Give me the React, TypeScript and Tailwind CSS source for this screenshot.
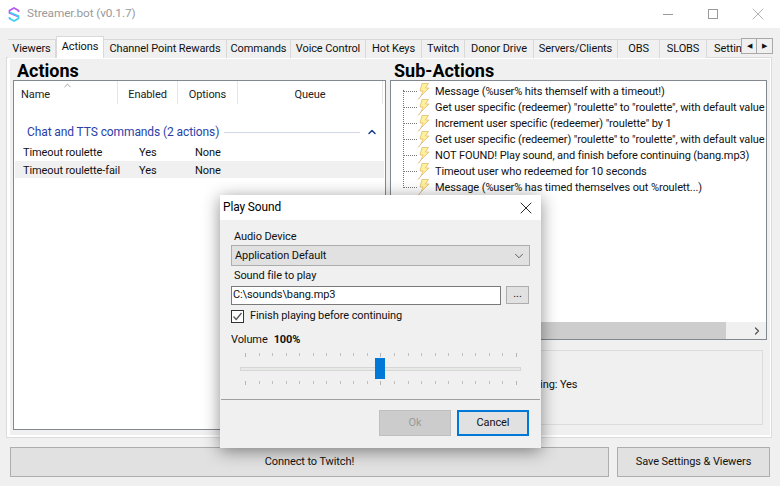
import { X, ChevronDown, ChevronUp, ChevronRight } from "lucide-react"

const tabs = [
  { label: "Viewers", width: "w-[48px]" },
  { label: "Actions", width: "w-[48px]", active: true },
  { label: "Channel Point Rewards", width: "w-[123px]" },
  { label: "Commands", width: "w-[64px]" },
  { label: "Voice Control", width: "w-[75px]" },
  { label: "Hot Keys", width: "w-[56px]" },
  { label: "Twitch", width: "w-[43px]" },
  { label: "Donor Drive", width: "w-[69px]" },
  { label: "Servers/Clients", width: "w-[84px]" },
  { label: "OBS", width: "w-[42px]" },
  { label: "SLOBS", width: "w-[47px]" },
]

const subActions = [
  'Message (%user% hits themself with a timeout!)',
  'Get user specific (redeemer) "roulette" to "roulette", with default value',
  'Increment user specific (redeemer) "roulette" by 1',
  'Get user specific (redeemer) "roulette" to "roulette", with default value',
  'NOT FOUND! Play sound, and finish before continuing (bang.mp3)',
  'Timeout user who redeemed for 10 seconds',
  'Message (%user% has timed themselves out %roulett...)',
]

const ticks = Array.from({ length: 21 }, (_, i) => i)

function Bolt() {
  return (
    <svg width="13" height="17" viewBox="0 0 13 17" className="shrink-0">
      <path d="M5 .5 L11.5 .5 L8.5 5 L12 5 L4 13 L6 8 L3 8 Z" fill="#fff09a" stroke="#e0bd70" strokeWidth="0.8" />
      <path d="M4 13 L1 16.5" stroke="#dcbc88" strokeWidth="1" />
    </svg>
  )
}

function Logo() {
  return (
    <svg width="12" height="15" viewBox="0 0 12 15" className="shrink-0">
      <path d="M10.5 5 L10.5 3.5 L6 1 L1.5 3.5 L1.5 6 L10 9.5" fill="none" stroke="#b45cf2" strokeWidth="1.7" />
      <path d="M1.5 10 L1.5 11.5 L6 14 L10.5 11.5 L10.5 9 L2 5.5" fill="none" stroke="#3fd0f5" strokeWidth="1.7" />
    </svg>
  )
}

function TickRow() {
  return (
    <div className="ml-[25px] flex h-[4px] w-[272px] items-start justify-between">
      {ticks.map((t) => (
        <div key={t} className={t % 10 === 0 ? "h-[4px] w-px bg-[#b4b4b4]" : "h-[3px] w-px bg-[#c0c0c0]"} />
      ))}
    </div>
  )
}

function PlaySoundDialog() {
  return (
    <div className="absolute left-[220px] top-[195px] flex h-[253px] w-[321px] flex-col bg-[#f0f0f0] shadow-[0_3px_16px_rgba(0,0,0,0.45)]">
      <div className="flex h-[25px] items-center justify-between bg-white pl-[3px] pr-[5px] text-[11.9px] text-black">
        <span>Play Sound</span>
        <X size={20} strokeWidth={1} />
      </div>
      <div className="flex flex-col px-[11px]">
        <div className="mt-[9px] h-[16px] pl-[3px] leading-[16px]">Audio Device</div>
        <div className="flex h-[21px] items-center justify-between border border-[#adadad] bg-[#e1e1e1] pl-[3px] pr-[3px]">
          <span className="pt-[2px]">Application Default</span>
          <ChevronDown size={14} strokeWidth={1.4} className="text-[#444]" />
        </div>
        <div className="mt-[2px] h-[16px] pl-[3px] leading-[16px]">Sound file to play</div>
        <div className="mt-[2px] flex gap-[5px]">
          <div className="flex h-[19px] w-[270px] items-center border border-[#7a7a7a] bg-white pl-[1px]">C:\sounds\bang.mp3</div>
          <div className="flex h-[18px] w-[23px] items-center justify-center border border-[#adadad] bg-[#e1e1e1] pb-[1px]">...</div>
        </div>
        <div className="mt-[5px] flex h-[13px] items-center gap-[6px]">
          <div className="flex h-[13px] w-[13px] items-center justify-center border border-[#333] bg-white">
            <svg width="11" height="11" viewBox="0 0 11 11">
              <path d="M1.5 5.5 L4.2 8.5 L9.5 2" fill="none" stroke="#555" strokeWidth="1.3" />
            </svg>
          </div>
          <span>Finish playing before continuing</span>
        </div>
        <div className="mt-[9px] flex h-[16px] items-center gap-[6px]">
          <span>Volume</span>
          <span className="font-bold">100%</span>
        </div>
      </div>
      <div className="mt-[5px] flex flex-col">
        <TickRow />
        <div className="relative mx-[20px] mt-[10px] h-[4px] w-[281px] border border-[#d6d6d6] bg-[#e7eae7]">
          <div className="absolute left-[134px] top-[-10px] h-[21px] w-[10px] bg-[#0078d7]" />
        </div>
        <div className="mt-[10px]">
          <TickRow />
        </div>
      </div>
      <div className="mx-px mt-[14px] h-px bg-[#a0a0a0]" />
      <div className="mt-[10px] flex justify-end gap-[6px] pr-[12px]">
        <div className="flex h-[26px] w-[72px] items-center justify-center border border-[#bfbfbf] bg-[#cccccc] text-[#9a9a9a]">Ok</div>
        <div className="flex h-[26px] w-[72px] items-center justify-center border-2 border-[#0078d7] bg-[#e1e1e1]">Cancel</div>
      </div>
    </div>
  )
}

export default function App() {
  return (
    <div className="relative flex h-[486px] w-[780px] flex-col overflow-hidden whitespace-nowrap bg-[#f0f0f0] font-[Roboto,sans-serif] text-[11px] tracking-[-0.1px] text-[#111]">
      {/* title bar */}
      <div className="flex h-[28px] items-center bg-white pl-[8px]">
        <Logo />
        <span className="ml-[7px] text-[11.8px] text-[#9a9a9a]">Streamer.bot (v0.1.7)</span>
        <div className="ml-auto flex items-center text-[#999]">
          <div className="flex w-[45px] justify-center">
            <div className="h-px w-[10px] bg-[#999]" />
          </div>
          <div className="flex w-[45px] justify-center">
            <div className="h-[10px] w-[10px] border border-[#999]" />
          </div>
          <div className="flex w-[45px] justify-center">
            <X size={20} strokeWidth={0.9} />
          </div>
        </div>
      </div>

      {/* tabs */}
      <div className="relative ml-[8px] mt-[8px] h-[22px] w-[733px] overflow-hidden">
        <div className="flex h-[22px] items-end">
          {tabs.map((tab) => (
            <div
              key={tab.label}
              className={
                tab.active
                  ? `flex h-[22px] ${tab.width} shrink-0 items-start justify-center border border-b-0 border-[#d9d9d9] bg-white pt-[2px]`
                  : `flex h-[19px] ${tab.width} shrink-0 items-center justify-center border-r border-t border-[#d9d9d9] bg-[#f0f0f0]`
              }
            >
              {tab.label}
            </div>
          ))}
          <div className="flex h-[19px] w-[40px] shrink-0 items-center border-t border-[#d9d9d9] pl-[7px]">Settings</div>
        </div>
      </div>
      <div className="absolute left-[741px] top-[38px] flex h-[16px] w-[32px]">
        <div className="flex w-[16px] items-center justify-center border border-[#a9a9a9] bg-[#f0f0f0] text-[7px]">◀</div>
        <div className="flex w-[16px] items-center justify-center border border-l-0 border-[#a9a9a9] bg-[#f0f0f0] text-[7px]">▶</div>
      </div>

      {/* tab page */}
      <div className="-mt-px ml-[6px] h-[381px] w-[766px] border border-[#dcdcdc]">
        <div className="flex h-full gap-[4px] border-b-[2px] border-l-[3px] border-r border-t border-white bg-[#f0f0f0] pl-[3px]">
          <div className="flex w-[373px] flex-col">
            <div className="h-[21px] pl-[4px] pt-px text-[18px] font-bold leading-[21px] tracking-normal text-black">Actions</div>
            <div className="flex h-[350px] flex-col border border-[#828790] bg-white">
              <div className="relative flex h-[23px] text-[#222]">
                <div className="w-[104px] border-r border-[#e5e5e5] pl-[7px] pt-[6px]">Name</div>
                <ChevronUp size={11} strokeWidth={1.5} className="absolute left-[48px] top-[-1px] text-[#777]" />
                <div className="w-[60px] border-r border-[#e5e5e5] pt-[6px] text-center">Enabled</div>
                <div className="w-[60px] border-r border-[#e5e5e5] pt-[6px] text-center">Options</div>
                <div className="w-[145px] border-r border-[#e5e5e5] pt-[6px] text-center">Queue</div>
              </div>
              <div className="mt-[20px] flex h-[16px] items-center pl-[13px] pr-[7px]">
                <span className="text-[12px] text-[#2a3fa8]">Chat and TTS commands (2 actions)</span>
                <div className="ml-[5px] h-px w-[136px] bg-[#d3d7ea]" />
                <ChevronUp size={12} strokeWidth={3} className="ml-auto text-[#16408f]" />
              </div>
              <div className="mt-[5px] flex h-[16px] items-center pl-[9px]">
                <span className="w-[116px]">Timeout roulette</span>
                <span className="w-[56px]">Yes</span>
                <span>None</span>
              </div>
              <div className="mx-px flex h-[17px] items-center bg-[#f0f0f0] pl-[8px] pt-[4px]">
                <span className="w-[116px]">Timeout roulette-fail</span>
                <span className="w-[56px]">Yes</span>
                <span>None</span>
              </div>
            </div>
          </div>

          <div className="flex w-[377px] flex-col">
            <div className="h-[21px] pl-[4px] pt-px text-[18px] font-bold leading-[21px] tracking-normal text-black">Sub-Actions</div>
            <div className="flex h-[260px] flex-col border border-[#828790] bg-white">
              <div className="relative flex-1 pl-[12px] pt-[2px]">
                <div className="absolute left-[12px] top-[9px] h-[96px] border-l border-dotted border-[#777]" />
                {subActions.map((text) => (
                  <div key={text} className="flex h-[16px] items-center">
                    <div className="w-[14px] shrink-0 border-t border-dotted border-[#777]" />
                    <Bolt />
                    <span className="ml-[5px] pt-[2px]">{text}</span>
                  </div>
                ))}
              </div>
              <div className="flex h-[17px] items-center bg-[#f0f0f0] pl-[18px]">
                <div className="h-full w-[317px] bg-[#cdcdcd]" />
                <ChevronRight size={12} strokeWidth={2.5} className="ml-auto mr-[3px] text-[#555]" />
              </div>
            </div>
            <div className="mx-[4px] mt-[10px] flex h-[75px] items-start border border-[#dcdcdc] pl-[87px] pt-[26px]">
              Queue Running: Yes
            </div>
          </div>
        </div>
      </div>

      {/* bottom buttons */}
      <div className="mt-[9px] flex gap-[8px] pl-[10px]">
        <div className="flex h-[30px] w-[599px] items-center justify-center border border-[#adadad] bg-[#e1e1e1]">Connect to Twitch!</div>
        <div className="flex h-[30px] w-[153px] items-center justify-center border border-[#adadad] bg-[#e1e1e1]">Save Settings &amp; Viewers</div>
      </div>

      <PlaySoundDialog />
    </div>
  )
}
